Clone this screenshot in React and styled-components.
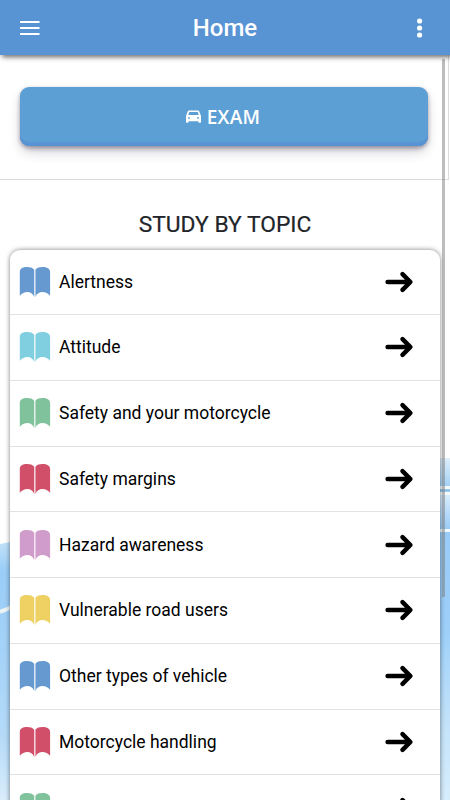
import styled, { createGlobalStyle } from "styled-components";

const GlobalStyle = createGlobalStyle`
  * {
    box-sizing: border-box;
  }
  body {
    margin: 0;
    overflow: hidden;
    background: #fff;
    font-family: Roboto, "Liberation Sans", sans-serif;
  }
`

const Page = styled.div`
  position: relative;
  height: 800px;
  overflow: hidden;
`

const Sky = styled.svg`
  position: absolute;
  inset: 0;
  z-index: -1;
`

const Header = styled.header`
  position: relative;
  z-index: 2;
  height: 55px;
  padding: 0 20px;
  display: flex;
  align-items: center;
  justify-content: space-between;
  background: #5893d4;
  color: #fff;
  box-shadow: 2px 2px 5px rgba(0, 0, 0, 0.6);
  > h1 {
    margin: 0;
    font-size: 24px;
    font-weight: 500;
    line-height: 56px;
  }
  > svg {
    display: block;
  }
`

const ExamSection = styled.section`
  width: 449px;
  height: 125px;
  padding: 32px 20px 0;
  background: #fff;
  border-right: 1px solid #dcdcdc;
  border-bottom: 1px solid #dcdcdc;
`

const ExamButton = styled.button`
  width: 408px;
  height: 59px;
  padding: 0 2px 0 0;
  display: flex;
  align-items: center;
  justify-content: center;
  gap: 6px;
  border: 0;
  border-radius: 9px;
  background: #5c9fd4;
  color: #fff;
  font-family: "Open Sans", sans-serif;
  font-size: 19px;
  font-weight: 600;
  letter-spacing: 0.3px;
  box-shadow: rgba(45, 35, 66, 0.4) 0 2px 4px,
    rgba(45, 35, 66, 0.3) 0 7px 13px -3px,
    #5893d4 0 -4px 0 inset;
`

const Topics = styled.section`
  padding: 30px 10px 0;
  > h2 {
    margin: 0;
    height: 40px;
    line-height: 30px;
    font-size: 22.800px;
    font-weight: 400;
    text-align: center;
    color: #212529;
    -webkit-text-stroke: 0.200px #212529;
  }
`

const TopicList = styled.ul`
  list-style-type: none;
  margin: 0;
  padding: 0;
  border-radius: 10px;
  background: #fff;
  box-shadow: 0 0 5px rgba(0, 0, 0, 0.5);
`

const Topic = styled.li`
  height: 65.75px;
  padding: 0 25px 0 9px;
  display: flex;
  align-items: center;
  border-bottom: 1px solid #e3e3e3;
  font-size: 17.5px;
  color: #000;
  &:first-child {
    height: 65px;
  }
  > span {
    flex: 1;
    padding-left: 8px;
  }
`

const ScrollThumb = styled.div`
  position: absolute;
  z-index: 1;
  top: 59px;
  left: 442px;
  width: 3px;
  height: 538px;
  background: rgba(128, 128, 128, 0.52);
`

const BookIcon = ({ color }) => (
  <svg width="32" height="32" viewBox="0 0 32 32" fill={color}>
    <path d="M.8 6C.8 2.500 3.500 1 8 1c3.200 0 5.700.8 7 2.500v27C13.700 27.700 11.500 26 8.400 26c-3.100 0-5.200 1.300-7.600 3.700z" />
    <path d="M16.500 3.500C17.800 1.800 20.300 1 23.500 1c4.500 0 7.600 1.500 7.600 5v23.700c-2.400-2.400-4.500-3.700-7.600-3.700s-5.700 1.700-7 4.500z" />
    <path d="M15 4h1.500v27H15z" opacity="0.25" />
  </svg>
)

const ArrowIcon = () => (
  <svg width="30" height="24" viewBox="0 0 30 24" fill="none" stroke="#000" strokeWidth="4.500" strokeLinecap="round" strokeLinejoin="round">
    <path d="M2.600 12H25M17.500 4.100l7.900 7.900-7.900 7.900" />
  </svg>
)

const CarIcon = () => (
  <svg width="15" height="14" viewBox="0 0 15 14" fill="#fff" fillRule="evenodd">
    <path d="M3.200.4h8.600c.8 0 1.300.4 1.500 1.100L15 6v6c0 .5-.3.700-.7.700h-1.100c-.5 0-.8-.3-.8-.7v-.7H2.600v.7c0 .4-.3.700-.8.700H.7c-.4 0-.7-.2-.7-.7V6l1.700-4.500C1.900.8 2.400.4 3.200.4zM3.300 2 2.300 5.100h10.400L11.700 2zM3 7a.9.9 0 1 0 0 1.800A.9.9 0 0 0 3 7zm9 0a.9.9 0 1 0 0 1.800A.9.9 0 0 0 12 7z" />
  </svg>
)

const topics = [
  { name: "Alertness", color: "#6699d0" },
  { name: "Attitude", color: "#80cfe0" },
  { name: "Safety and your motorcycle", color: "#7fc29b" },
  { name: "Safety margins", color: "#d14f69" },
  { name: "Hazard awareness", color: "#d09ccb" },
  { name: "Vulnerable road users", color: "#efd062" },
  { name: "Other types of vehicle", color: "#6699d0" },
  { name: "Motorcycle handling", color: "#d14f69" },
  { name: "", color: "#7fc29b" },
]

const Background = () => (
  <Sky width="450" height="800" viewBox="0 0 450 800">
    <defs>
      <linearGradient id="left" x1="0" y1="0" x2="0" y2="1">
        <stop offset="0" stopColor="#c3e2f9" />
        <stop offset="0.12" stopColor="#9acdf7" />
        <stop offset="0.45" stopColor="#a6d3f8" />
        <stop offset="0.75" stopColor="#b4daf8" />
        <stop offset="1" stopColor="#d9edfb" />
      </linearGradient>
      <linearGradient id="right" x1="0" y1="0" x2="0" y2="1">
        <stop offset="0" stopColor="#deeffb" />
        <stop offset="0.08" stopColor="#a5d2f5" />
        <stop offset="0.11" stopColor="#d7ecfb" />
        <stop offset="0.21" stopColor="#98cbf7" />
        <stop offset="0.5" stopColor="#9dcff9" />
        <stop offset="0.78" stopColor="#c4e3fa" />
        <stop offset="1" stopColor="#d6edfc" />
      </linearGradient>
    </defs>
    <path d="M0 544l20-4v260H0z" fill="url(#left)" />
    <path d="M430 458h20v342h-20z" fill="url(#right)" />
    <path d="M0 612l12-5" stroke="#edf5f6" strokeWidth="4" />
    <path d="M430 487.500h20M430 493.500h20M430 530.500h20" stroke="#f4fafc" strokeWidth="3" />
    <path d="M430 490.500h20" stroke="#85bde6" strokeWidth="2" />
  </Sky>
)

const App = () => {
  return (
    <Page>
      <GlobalStyle />
      <Background />
      <Header>
        <svg width="20" height="16" viewBox="0 0 20 16" fill="#fff">
          <path d="M0 1h19.500v2H0zM0 7h19.500v2H0zM0 13h19.500v2H0z" />
        </svg>
        <h1>Home</h1>
        <svg width="20" height="20" viewBox="0 0 20 20" fill="#fff">
          <circle cx="9.600" cy="3" r="2.600" />
          <circle cx="9.600" cy="10" r="2.600" />
          <circle cx="9.600" cy="17" r="2.600" />
        </svg>
      </Header>
      <ExamSection>
        <ExamButton>
          <CarIcon />
          EXAM
        </ExamButton>
      </ExamSection>
      <Topics>
        <h2>STUDY BY TOPIC</h2>
        <TopicList>
          {topics.map((topic, index) => (
            <Topic key={index}>
              <BookIcon color={topic.color} />
              <span>{topic.name}</span>
              <ArrowIcon />
            </Topic>
          ))}
        </TopicList>
      </Topics>
      <ScrollThumb />
    </Page>
  );
}

export default App;
